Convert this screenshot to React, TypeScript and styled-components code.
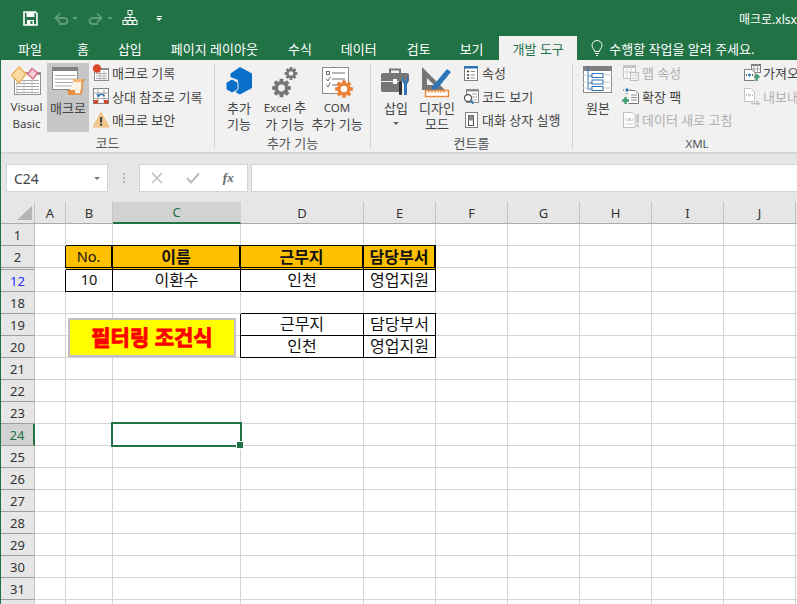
import React from "react";
import styled, { createGlobalStyle } from "styled-components";

const GREEN = "#217346";
const FONT = `"Noto Sans", "Noto Sans CJK KR", sans-serif`;

const GlobalStyle = createGlobalStyle`
  html, body { margin: 0; padding: 0; background: #fff; overflow: hidden; }
  body { font-family: ${FONT}; }
  * { box-sizing: border-box; }
`;

// ---------- icons ----------

const gearPath = (cx: number, cy: number, r: number, teeth = 8) => {
  const pts: string[] = [];
  const inner = r * 0.72;
  for (let i = 0; i < teeth; i++) {
    const a = (i / teeth) * Math.PI * 2;
    const w = Math.PI / teeth / 1.7;
    const p = (rad: number, ang: number) =>
      `${(cx + rad * Math.cos(ang)).toFixed(2)} ${(cy + rad * Math.sin(ang)).toFixed(2)}`;
    pts.push(p(inner, a - w * 1.4), p(r, a - w * 0.8), p(r, a + w * 0.8), p(inner, a + w * 1.4));
  }
  const hole = r * 0.36;
  return `M${pts.join("L")}Z M${cx - hole} ${cy}a${hole} ${hole} 0 1 0 ${hole * 2} 0a${hole} ${hole} 0 1 0 ${-hole * 2} 0Z`;
};

const TableLines = ({ x, y, w, rows, gap, color = "#a6a6a6" }: { x: number; y: number; w: number; rows: number; gap: number; color?: string }) => (
  <>
    {Array.from({ length: rows }).map((_, i) => (
      <line key={i} x1={x} x2={x + w} y1={y + i * gap + 0.5} y2={y + i * gap + 0.5} stroke={color} />
    ))}
  </>
);

const VisualBasicIcon = () => (
  <svg width="32" height="30" viewBox="1 0 32 30">
    <rect x="4.500" y="6.500" width="26" height="22" fill="#fff" stroke="#8f8f8f" />
    <rect x="20" y="6" width="11" height="3" fill="#8f8f8f" />
    <TableLines x={6} y={14} w={23} rows={5} gap={3} />
    <path d="M7 14V28M14 14V28M22 14V28" stroke="#c4c4c4" fill="none" />
    <path d="M9 1L16 8 9 17 1.500 9Z" fill="#f7dca4" stroke="#eeb45c" strokeWidth="1.500" />
    <path d="M22 2.500L27.500 7 23 13 17.500 8Z" fill="#f9cfd7" stroke="#dc6d85" strokeWidth="1.500" />
  </svg>
);

const MacroIcon = () => (
  <svg width="34" height="30" viewBox="0 0 34 30">
    <rect x="1.500" y="1.500" width="25" height="22" fill="#fff" stroke="#8a8a8a" />
    <rect x="1" y="1" width="26" height="4" fill="#7f7f7f" />
    <TableLines x={4} y={9} w={21} rows={4} gap={3.500} color="#a9a9a9" />
    <path d="M23 14H33L31 16V25H30V28H17" fill="#fdf3e3" stroke="#ea8c3d" strokeWidth="1.500" />
    <path d="M16 24H24V28H18Z" fill="#ea8c3d" />
    <path d="M22 13h9v3h-9z" fill="#f3b67b" />
  </svg>
);

const RecordIcon = () => (
  <svg width="18" height="18" viewBox="0 0 18 18">
    <rect x="2.500" y="4.500" width="14" height="12" fill="#fff" stroke="#8c8c8c" />
    <rect x="9" y="4" width="8" height="2" fill="#8c8c8c" />
    <TableLines x={4} y={9} w={11} rows={3} gap={2.500} />
    <path d="M8 7V16M12 7V16" stroke="#b5b5b5" />
    <circle cx="5" cy="4.500" r="4.200" fill="#d9472b" />
  </svg>
);

const RelativeIcon = () => (
  <svg width="18" height="18" viewBox="0 0 18 18">
    <rect x="1.500" y="1.500" width="15" height="15" fill="#fff" stroke="#7f7f7f" />
    <path d="M6 1V17M12 1V17M1 6H17M1 11.500H17" stroke="#a8a8a8" />
    <path d="M12.500 9C11 6.500 7.500 6.500 6 9" stroke="#2e75b6" strokeWidth="1.500" fill="none" />
    <path d="M4.500 6.500L5.500 10 8.500 9Z" fill="#2e75b6" />
    <rect x="2" y="13" width="4" height="3.500" fill="#d9472b" />
    <rect x="12" y="13" width="4" height="3.500" fill="#d9472b" />
  </svg>
);

const WarnIcon = () => (
  <svg width="18" height="18" viewBox="0 0 18 18">
    <path d="M9 1.500L17 16H1Z" fill="#f3c98b" stroke="#edbd79" strokeLinejoin="round" />
    <rect x="8" y="6" width="2.200" height="5.500" fill="#444" />
    <rect x="8" y="12.500" width="2.200" height="2.200" fill="#444" />
  </svg>
);

const AddinIcon = () => (
  <svg width="30" height="30" viewBox="0 0 30 30">
    <path d="M16 1L28 7.500V22L16 28.500 12 26.500 14 14 6.500 11V7.500Z" fill="#0a6fc9" />
    <path d="M8 13L14 16.500V23.500L8 27 2 23.500V16.500Z" fill="#0a6fc9" stroke="#f1f1f1" strokeWidth="1" />
  </svg>
);

const GearsIcon = () => (
  <svg width="32" height="32" viewBox="0 0 32 32">
    <path d={gearPath(12.500, 22, 9.500, 8)} fill="#767676" fillRule="evenodd" />
    <path d={gearPath(22, 7.500, 6.500, 8)} fill="#767676" fillRule="evenodd" />
  </svg>
);

const ComIcon = () => (
  <svg width="32" height="32" viewBox="0 0 32 32">
    <rect x="1.500" y="1.500" width="26" height="26" fill="#fff" stroke="#8a8a8a" />
    <rect x="5.500" y="5.500" width="3" height="3" fill="none" stroke="#777" />
    <path d="M11 7H24M11 13H24M11 19H17M5 12.500L7 15 9.500 10.500M5 18.500L7 21 9.500 16.500" stroke="#707070" fill="none" />
    <path d={gearPath(23, 23, 9, 8)} fill="#ea8335" fillRule="evenodd" />
  </svg>
);

const InsertIcon = () => (
  <svg width="32" height="32" viewBox="0 0 32 32">
    <path d="M10 7V3.500H20V7" fill="none" stroke="#767676" strokeWidth="2" />
    <path d="M1 9a2 2 0 0 1 2-2h24a2 2 0 0 1 2 2v6H1Z" fill="#767676" />
    <path d="M1 16H20V26H3a2 2 0 0 1-2-2Z" fill="#767676" />
    <rect x="13" y="13" width="4" height="5" fill="#fff" />
    <path d="M22.500 11V16L24 18V29H27V18L28.500 16V11H27V15H24V11Z" fill="#2e75b6" />
    <rect x="19" y="15" width="3" height="14" rx="1" fill="#333" />
  </svg>
);

const DesignIcon = () => (
  <svg width="34" height="32" viewBox="0 0 34 32">
    <path d="M2 1V24H25Z" fill="#767676" />
    <path d="M7 12V19H14Z" fill="#f1f1f1" />
    <path d="M12 21L27 3 31 6 17 23 11 25Z" fill="#2e75b6" />
    <rect x="5.500" y="24.500" width="23" height="6" fill="#fff" stroke="#ea8c3d" strokeWidth="1.500" />
    <path d="M9 25V27M12 25V27M15 25V27M18 25V27M21 25V27M24 25V27" stroke="#ea8c3d" />
  </svg>
);

const PropsIcon = () => (
  <svg width="18" height="18" viewBox="0 0 18 18">
    <rect x="2.500" y="2.500" width="13" height="14" fill="#fff" stroke="#7f7f7f" />
    <rect x="2" y="2" width="14" height="2.500" fill="#2e75b6" />
    <path d="M5 7.500h2M5 11h2M5 14h2" stroke="#333" strokeWidth="1.500" />
    <path d="M8.500 7.500H13M8.500 11H13M8.500 14H13" stroke="#8c8c8c" />
  </svg>
);

const CodeIcon = () => (
  <svg width="18" height="18" viewBox="0 0 18 18">
    <rect x="4.500" y="2.500" width="12" height="13" fill="#fff" stroke="#8c8c8c" />
    <rect x="4" y="2" width="13" height="2.500" fill="#8c8c8c" />
    <path d="M10 7H15M10 10H15M10 13H15" stroke="#a6a6a6" />
    <circle cx="6" cy="11" r="3.500" fill="#fff" stroke="#5a5a5a" strokeWidth="1.300" />
    <path d="M8.500 13.500L11.500 16.500" stroke="#2e75b6" strokeWidth="2" />
  </svg>
);

const DialogIcon = () => (
  <svg width="18" height="18" viewBox="0 0 18 18">
    <rect x="3.500" y="1.500" width="12" height="15" fill="#fff" stroke="#7f7f7f" />
    <rect x="6.500" y="4.500" width="5" height="10" fill="#fff" stroke="#555" />
    <rect x="6.500" y="4.500" width="5" height="5" fill="#8a8a8a" />
  </svg>
);

const MapPropsIcon = () => (
  <svg width="18" height="18" viewBox="0 0 18 18">
    <rect x="1.500" y="1.500" width="12" height="13" fill="#fff" stroke="#c2c2c2" />
    <rect x="1" y="1" width="13" height="3" fill="#c2c2c2" />
    <path d="M5 1V15M9 1V15M1 8H14" stroke="#cfcfcf" />
    <rect x="8.500" y="8.500" width="8" height="8" fill="#f1f1f1" stroke="#bdbdbd" />
    <path d="M10.500 11h1M13 11h2M10.500 14h1M13 14h2" stroke="#bdbdbd" />
  </svg>
);

const PackIcon = () => (
  <svg width="18" height="18" viewBox="0 0 18 18">
    <path d="M7.500 3.500H13L16.500 7V16.500H6.500" fill="#fff" stroke="#7a7a7a" />
    <path d="M9 8H15M9 10.500H15M9 13H15" stroke="#8c8c8c" />
    <circle cx="5" cy="3" r="1.700" fill="#2e75b6" />
    <path d="M1 3h1M8 3h1M5 6v1" stroke="#555" />
    <path d="M0 13.500H7M3.500 10V17" stroke="#3f9b6c" strokeWidth="2.400" />
  </svg>
);

const RefreshIcon = () => (
  <svg width="18" height="18" viewBox="0 0 18 18">
    <path d="M1.500 1.500H10L13 4.500V16.500H1.500Z" fill="#fff" stroke="#c2c2c2" />
    <path d="M3.500 8.500L5 7M3.500 8.500L5 10M11 8.500L9.500 7M11 8.500L9.500 10" stroke="#bdbdbd" fill="none" />
    <circle cx="7.200" cy="8.500" r="1.500" fill="#c4c4c4" />
    <path d="M3.500 13H11" stroke="#cfcfcf" />
    <rect x="14.500" y="3" width="2.200" height="9" fill="#bdbdbd" />
    <rect x="14.500" y="13.500" width="2.200" height="2.500" fill="#bdbdbd" />
  </svg>
);

const ImportIcon = () => (
  <svg width="18" height="18" viewBox="0 0 18 18">
    <rect x="8.500" y="0.500" width="9" height="8" fill="#fff" stroke="#7a7a7a" />
    <rect x="8" y="0" width="10" height="2" fill="#7a7a7a" />
    <path d="M11 0V9M14.500 0V9M8 5H18" stroke="#a6a6a6" />
    <path d="M1.500 5.500H9L12 8.500V16.500H1.500Z" fill="#fff" stroke="#7a7a7a" />
    <circle cx="6.500" cy="11" r="1.500" fill="#2e75b6" />
    <path d="M3 11L4 10M3 11L4 12M10 11L9 10M10 11L9 12" stroke="#555" fill="none" />
    <path d="M14 17V11M11.500 13.500L14 11 16.500 13.500" stroke="#3f9b6c" strokeWidth="1.800" fill="none" />
  </svg>
);

const ExportIcon = () => (
  <svg width="18" height="18" viewBox="0 0 18 18">
    <path d="M1.500 1.500H8L11.500 5V14.500H1.500Z" fill="#fff" stroke="#c2c2c2" />
    <circle cx="6.500" cy="8" r="1.500" fill="#cdcdcd" />
    <path d="M3 8L4 7M3 8L4 9M10 8L9 7M10 8L9 9" stroke="#c2c2c2" fill="none" />
    <path d="M8 16.500H16M13.500 14L16 16.500 13.500 18.500" stroke="#c2c2c2" strokeWidth="1.500" fill="none" />
  </svg>
);

const SourceIcon = () => (
  <svg width="30" height="30" viewBox="0 0 30 30">
    <rect x="0.500" y="0.500" width="28" height="26" fill="#fff" stroke="#8a8a8a" />
    <rect x="0" y="0" width="29" height="5" fill="#7f7f7f" />
    <path d="M5 0V24M5 10H9M5 17H9M5 23H9" stroke="#2e75b6" />
    <path d="M0 9H29M0 16H29M0 22H29" stroke="#c9c9c9" />
    <rect x="9" y="7.500" width="11" height="4" fill="#fff" stroke="#2e75b6" />
    <rect x="9" y="14" width="11" height="4" fill="#fff" stroke="#2e75b6" />
    <rect x="9" y="20.500" width="11" height="4" fill="#fff" stroke="#2e75b6" />
  </svg>
);

// ---------- title bar ----------

const TitleBar = styled.header`
  height: 36px;
  background: ${GREEN};
  display: flex;
  align-items: center;
  padding-left: 22px;
  overflow: hidden;
`;

const QuickAccess = styled.div`
  display: flex;
  align-items: center;
  height: 32px;
`;

const QuickSlot = styled.span<{ $width: number; $left?: number }>`
  width: ${(p) => p.$width}px;
  margin-left: ${(p) => p.$left ?? 0}px;
  display: flex;
  align-items: center;
  justify-content: center;
`;

const FileName = styled.div`
  margin-left: auto;
  width: 58px;
  flex: none;
  font-size: 12px;
  color: #fff;
  white-space: nowrap;
  margin-top: 2px;
`;

const SaveIcon = () => (
  <svg width="15" height="15" viewBox="0 0 15 15">
    <path d="M1 1H12.500L14 2.500V14H1Z" fill="none" stroke="#fff" strokeWidth="1.600" />
    <rect x="3.500" y="1" width="8" height="5" fill="#fff" />
    <rect x="4" y="9" width="7" height="5" fill="#fff" />
    <rect x="7.500" y="10" width="2" height="3" fill={GREEN} />
  </svg>
);

const ArrowIcon = ({ flip }: { flip?: boolean }) => (
  <svg width="15" height="13" viewBox="0 0 15 13" style={flip ? { transform: "scaleX(-1)" } : undefined}>
    <path d="M2 6H10C12.500 6 13.500 7.500 13.500 9S12.500 12 10 12H5" fill="none" stroke="#5e9c7c" strokeWidth="1.800" />
    <path d="M6 1.500L1.500 6 6 10.500" fill="none" stroke="#5e9c7c" strokeWidth="1.800" />
  </svg>
);

const NetworkIcon = () => (
  <svg width="16" height="16" viewBox="0 0 16 16" fill="#fff" stroke="#fff">
    <rect x="6" y="0.500" width="4" height="4" fill="none" />
    <rect x="1" y="10.500" width="4" height="4" fill="none" />
    <rect x="6" y="10.500" width="4" height="4" fill="none" />
    <rect x="11" y="10.500" width="4" height="4" fill="none" />
    <path d="M8 4.500V10.500M8 7.500H3V10.500M8 7.500H13V10.500" fill="none" />
  </svg>
);

const SmallCaret = styled.span<{ $color: string }>`
  width: 0;
  height: 0;
  border-left: 3px solid transparent;
  border-right: 3px solid transparent;
  border-top: 3px solid ${(p) => p.$color};
`;

const CustomizeCaret = styled.span`
  display: flex;
  flex-direction: column;
  align-items: center;
  gap: 1px;
  &::before {
    content: "";
    width: 5px;
    height: 1px;
    background: #fff;
  }
  &::after {
    content: "";
    border-left: 3px solid transparent;
    border-right: 3px solid transparent;
    border-top: 3px solid #fff;
  }
`;

// ---------- tabs ----------

const TabBar = styled.nav`
  height: 24px;
  background: ${GREEN};
  display: flex;
  align-items: stretch;
  padding-left: 3px;
`;

const Tab = styled.div<{ $active?: boolean; $pad?: number; $left?: number }>`
  display: flex;
  align-items: center;
  margin-left: ${(p) => p.$left ?? 0}px;
  padding: 0 ${(p) => p.$pad ?? 14.5}px;
  font-size: 13px;
  white-space: nowrap;
  color: ${(p) => (p.$active ? GREEN : "#fff")};
  background: ${(p) => (p.$active ? "#f1f1f1" : "transparent")};
`;

const TellMe = styled.div`
  display: flex;
  align-items: center;
  gap: 5px;
  padding-left: 13px;
  font-size: 13px;
  color: #fff;
  white-space: nowrap;
`;

// ---------- ribbon ----------

const Ribbon = styled.section`
  height: 94px;
  display: flex;
  background: #f1f1f1;
  border-bottom: 2px solid #d6d6d6;
  overflow: hidden;
`;

const Group = styled.div<{ $width: number }>`
  width: ${(p) => p.$width}px;
  flex: none;
  display: flex;
  flex-direction: column;
  align-items: stretch;
`;

const GroupBody = styled.div<{ $pad: number }>`
  height: 74px;
  padding: 3px 0 0 ${(p) => p.$pad}px;
  display: flex;
`;

const GroupLabel = styled.div`
  height: 18px;
  line-height: 18px;
  font-size: 13px;
  color: #555;
  text-align: center;
`;

const Separator = styled.div`
  width: 1px;
  flex: none;
  margin: 4px 0 4px;
  background: #d2d2d2;
`;

const LargeButton = styled.div<{ $width: number; $active?: boolean; $gapAfter?: number }>`
  width: ${(p) => p.$width}px;
  height: 69px;
  flex: none;
  margin-right: ${(p) => p.$gapAfter ?? 0}px;
  display: flex;
  flex-direction: column;
  align-items: center;
  background: ${(p) => (p.$active ? "#c6c6c6" : "transparent")};
`;

const LargeIcon = styled.div`
  height: 37px;
  display: flex;
  align-items: flex-start;
  justify-content: center;
  padding-top: 3px;
`;

const LargeText = styled.div`
  font-size: 13px;
  line-height: 16px;
  color: #444;
  text-align: center;
  white-space: pre;
`;

const Latin = styled.span`
  font-size: 11.5px;
`;

const DropCaret = styled(SmallCaret)`
  margin-top: 6px;
`;

const SmallList = styled.div<{ $width?: number }>`
  display: flex;
  flex-direction: column;
  margin-top: -2px;
  width: ${(p) => (p.$width ? `${p.$width}px` : "auto")};
  flex: none;
`;

const SmallRow = styled.div<{ $disabled?: boolean }>`
  height: 23.5px;
  display: flex;
  align-items: center;
  gap: 2px;
  font-size: 13px;
  white-space: nowrap;
  color: ${(p) => (p.$disabled ? "#b0b0b0" : "#444")};
`;

// ---------- formula bar ----------

const FormulaBar = styled.div`
  height: 48px;
  background: #e6e6e6;
  display: flex;
  padding: 10px 0 0 5px;
`;

const FormulaBox = styled.div`
  height: 28px;
  background: #fff;
  border: 1px solid #d4d4d4;
  display: flex;
  align-items: center;
`;

const NameBox = styled(FormulaBox)`
  width: 102px;
  padding: 0 7px;
  justify-content: space-between;
  font-size: 14px;
  color: #444;
`;

const BarGrip = styled.div`
  width: 31px;
  height: 28px;
  display: flex;
  flex-direction: column;
  align-items: center;
  justify-content: center;
  gap: 2px;
  i {
    width: 2px;
    height: 2px;
    background: #b5b5b5;
  }
`;

const FormulaButtons = styled(FormulaBox)`
  width: 109px;
  justify-content: space-around;
  padding: 0 2px 0 0;
  margin-right: 3px;
`;

const FxLabel = styled.span`
  font-family: "Liberation Serif", serif;
  font-style: italic;
  font-weight: 700;
  font-size: 13px;
  color: #666;
`;

const FormulaInput = styled(FormulaBox)`
  flex: 1;
  border-right: none;
`;

// ---------- sheet ----------

const COLUMNS: [string, number][] = [
  ["A", 31], ["B", 47], ["C", 128], ["D", 123], ["E", 72], ["F", 72],
  ["G", 72], ["H", 72], ["I", 72], ["J", 72], ["", 40],
];

type CellKind = "header" | "box" | undefined;
type CellData = { text: string; kind: CellKind; bold?: boolean; latin?: boolean };

const CELLS: Record<string, Record<string, CellData>> = {
  "2": {
    B: { text: "No.", kind: "header", latin: true },
    C: { text: "이름", kind: "header", bold: true },
    D: { text: "근무지", kind: "header", bold: true },
    E: { text: "담당부서", kind: "header", bold: true },
  },
  "12": {
    B: { text: "10", kind: "box", latin: true },
    C: { text: "이환수", kind: "box" },
    D: { text: "인천", kind: "box" },
    E: { text: "영업지원", kind: "box" },
  },
  "19": {
    D: { text: "근무지", kind: "box" },
    E: { text: "담당부서", kind: "box" },
  },
  "20": {
    D: { text: "인천", kind: "box" },
    E: { text: "영업지원", kind: "box" },
  },
};

const ROW_LABELS = ["1", "2", "12", ...Array.from({ length: 15 }, (_, i) => String(i + 18))];

const Sheet = styled.main`
  position: relative;
  height: 402px;
  overflow: hidden;
  background: #fff;
`;

const Row = styled.div`
  display: flex;
  height: 22px;
`;

const HeaderRow = styled(Row)`
  background: #e6e6e6;
`;

const Corner = styled.div`
  width: 34px;
  flex: none;
  background: #e6e6e6;
  border-right: 1px solid #c4c4c4;
  border-bottom: 1px solid #ababab;
  padding: 4px 2px 3px 16px;
  &::after {
    content: "";
    display: block;
    width: 15px;
    height: 14px;
    background: #b4b4b4;
    clip-path: polygon(100% 0, 100% 100%, 0 100%);
  }
`;

const ColHead = styled.div<{ $width: number; $selected?: boolean }>`
  width: ${(p) => p.$width}px;
  flex: none;
  display: flex;
  align-items: center;
  justify-content: center;
  font-size: 13px;
  color: ${(p) => (p.$selected ? GREEN : "#333")};
  background: ${(p) => (p.$selected ? "#d2d2d2" : "#e6e6e6")};
  border-right: 1px solid ${(p) => (p.$selected ? "#d2d2d2" : "#c4c4c4")};
  border-bottom: ${(p) => (p.$selected ? `2px solid ${GREEN}` : "1px solid #ababab")};
`;

const RowHead = styled.div<{ $selected?: boolean; $filtered?: boolean }>`
  width: 34px;
  flex: none;
  display: flex;
  align-items: center;
  justify-content: center;
  font-size: 13px;
  color: ${(p) => (p.$selected ? GREEN : p.$filtered ? "#2a2aff" : "#333")};
  background: ${(p) => (p.$selected ? "#d2d2d2" : "#e6e6e6")};
  border-right: ${(p) => (p.$selected ? `2px solid ${GREEN}` : "1px solid #c4c4c4")};
  border-bottom: 1px solid #9e9e9e;
`;

const Cell = styled.div<{ $width: number; $kind?: CellKind; $bold?: boolean; $latin?: boolean; $selected?: boolean }>`
  position: relative;
  z-index: ${(p) => (p.$selected ? 2 : "auto")};
  width: ${(p) => p.$width}px;
  flex: none;
  display: flex;
  align-items: center;
  justify-content: center;
  padding-bottom: ${(p) => (p.$kind === "box" ? 3 : p.$kind === "header" ? 2 : 0)}px;
  font-size: ${(p) => (p.$latin ? 14.5 : 16)}px;
  font-weight: ${(p) => (p.$bold ? 700 : 400)};
  color: #111;
  white-space: nowrap;
  background: ${(p) => (p.$kind === "header" ? "#ffc000" : "#fff")};
  border-right: ${(p) => (p.$kind === "header" ? 2 : 1)}px solid ${(p) => (p.$kind ? "#000" : "#d4d4d4")};
  border-bottom: 1px solid ${(p) => (p.$kind ? "#000" : "#d4d4d4")};
  box-shadow: ${(p) => (p.$kind ? "-1px 0 0 #000, 0 -1px 0 #000" : "none")};
  ${(p) =>
    p.$selected &&
    `
    &::before {
      content: "";
      position: absolute;
      inset: -2px -2px -2px -2px;
      border: 2px solid ${GREEN};
    }
    &::after {
      content: "";
      position: absolute;
      right: -4px;
      bottom: -4px;
      width: 6px;
      height: 6px;
      background: ${GREEN};
      border: 1px solid #fff;
      z-index: 1;
    }
  `}
`;

const HiddenRowGap = styled.div`
  display: flex;
  height: 2px;
`;

const GapHead = styled.div`
  width: 34px;
  flex: none;
  background: #e6e6e6;
  border-right: 1px solid #c4c4c4;
  border-bottom: 1px solid #9e9e9e;
`;

const GapFill = styled.div<{ $width: number; $fill: boolean }>`
  width: ${(p) => p.$width}px;
  flex: none;
  background: ${(p) => (p.$fill ? "#ffc000" : "#fff")};
  border-right: 1px solid ${(p) => (p.$fill ? "#000" : "#d4d4d4")};
`;

const FilterShape = styled.div`
  position: absolute;
  left: 67px;
  top: 116px;
  width: 168px;
  height: 39px;
  padding-bottom: 4px;
  background: #ffff00;
  border: 2px solid #c0c0c0;
  display: flex;
  align-items: center;
  justify-content: center;
  font-size: 21px;
  font-weight: 700;
  color: #ff0000;
  -webkit-text-stroke: 0.9px #ff0000;
  white-space: nowrap;
`;

const Page = styled.div`
  width: 797px;
  height: 604px;
  overflow: hidden;
  border-left: 1px solid ${GREEN};
  position: relative;
`;

const TextButton = ({ icon, children, width, active, gapAfter, caret }: { icon: React.ReactNode; children: React.ReactNode; width: number; active?: boolean; gapAfter?: number; caret?: boolean }) => (
  <LargeButton $width={width} $active={active} $gapAfter={gapAfter}>
    <LargeIcon>{icon}</LargeIcon>
    <LargeText>{children}</LargeText>
    {caret && <DropCaret $color="#666" />}
  </LargeButton>
);

export default function App() {
  return (
    <Page>
      <GlobalStyle />
      <TitleBar>
        <QuickAccess>
          <QuickSlot $width={15}><SaveIcon /></QuickSlot>
          <QuickSlot $width={20} $left={13}><ArrowIcon /></QuickSlot>
          <QuickSlot $width={8}><SmallCaret $color="#5e9c7c" /></QuickSlot>
          <QuickSlot $width={20} $left={6}><ArrowIcon flip /></QuickSlot>
          <QuickSlot $width={10}><SmallCaret $color="#5e9c7c" /></QuickSlot>
          <QuickSlot $width={30}><NetworkIcon /></QuickSlot>
          <QuickSlot $width={28}><CustomizeCaret /></QuickSlot>
        </QuickAccess>
        <FileName>매크로.xlsx</FileName>
      </TitleBar>

      <TabBar>
        <Tab $pad={14}>파일</Tab>
        <Tab $left={6.5}>홈</Tab>
        <Tab>삽입</Tab>
        <Tab>페이지 레이아웃</Tab>
        <Tab $left={1}>수식</Tab>
        <Tab>데이터</Tab>
        <Tab $left={1}>검토</Tab>
        <Tab>보기</Tab>
        <Tab $active $pad={13.5} $left={1}>개발 도구</Tab>
        <TellMe>
          <svg width="14" height="16" viewBox="0 0 14 16" fill="none" stroke="#fff">
            <path d="M4.500 11.500C4.500 9 2 8.500 2 5.500a5 5 0 0 1 10 0C12 8.500 9.500 9 9.500 11.500Z" />
            <path d="M5 13.500H9M6 15.500H8" />
          </svg>
          수행할 작업을 알려 주세요.
        </TellMe>
      </TabBar>

      <Ribbon>
        <Group $width={213}>
          <GroupBody $pad={5}>
            <TextButton icon={<VisualBasicIcon />} width={41}><Latin>{"Visual\nBasic"}</Latin></TextButton>
            <TextButton icon={<MacroIcon />} width={42} active gapAfter={3}>매크로</TextButton>
            <SmallList>
              <SmallRow><RecordIcon />매크로 기록</SmallRow>
              <SmallRow><RelativeIcon />상대 참조로 기록</SmallRow>
              <SmallRow><WarnIcon />매크로 보안</SmallRow>
            </SmallList>
          </GroupBody>
          <GroupLabel>코드</GroupLabel>
        </Group>
        <Separator />
        <Group $width={155}>
          <GroupBody $pad={6}>
            <TextButton icon={<AddinIcon />} width={36} gapAfter={3}>{"추가\n기능"}</TextButton>
            <TextButton icon={<GearsIcon />} width={50}><Latin>Excel</Latin>{" 추\n가 기능"}</TextButton>
            <TextButton icon={<ComIcon />} width={54}><Latin>COM</Latin>{"\n추가 기능"}</TextButton>
          </GroupBody>
          <GroupLabel>추가 기능</GroupLabel>
        </Group>
        <Separator />
        <Group $width={201}>
          <GroupBody $pad={5}>
            <TextButton icon={<InsertIcon />} width={40} caret>삽입</TextButton>
            <TextButton icon={<DesignIcon />} width={42} gapAfter={4}>{"디자인\n모드"}</TextButton>
            <SmallList>
              <SmallRow><PropsIcon />속성</SmallRow>
              <SmallRow><CodeIcon />코드 보기</SmallRow>
              <SmallRow><DialogIcon />대화 상자 실행</SmallRow>
            </SmallList>
          </GroupBody>
          <GroupLabel>컨트롤</GroupLabel>
        </Group>
        <Separator />
        <Group $width={248}>
          <GroupBody $pad={5}>
            <TextButton icon={<SourceIcon />} width={40} gapAfter={4}>원본</TextButton>
            <SmallList $width={121}>
              <SmallRow $disabled><MapPropsIcon />맵 속성</SmallRow>
              <SmallRow><PackIcon />확장 팩</SmallRow>
              <SmallRow $disabled><RefreshIcon />데이터 새로 고침</SmallRow>
            </SmallList>
            <SmallList>
              <SmallRow><ImportIcon />가져오기</SmallRow>
              <SmallRow $disabled><ExportIcon />내보내기</SmallRow>
            </SmallList>
          </GroupBody>
          <GroupLabel><Latin>XML</Latin></GroupLabel>
        </Group>
      </Ribbon>

      <FormulaBar>
        <NameBox>
          C24
          <SmallCaret $color="#777" />
        </NameBox>
        <BarGrip><i /><i /><i /></BarGrip>
        <FormulaButtons>
          <svg width="12" height="12" viewBox="0 0 12 12"><path d="M1 1L11 11M11 1L1 11" stroke="#bdbdbd" strokeWidth="1.500" /></svg>
          <svg width="14" height="12" viewBox="0 0 14 12"><path d="M1 6L5 10.500 13 1.500" stroke="#bdbdbd" strokeWidth="2" fill="none" /></svg>
          <FxLabel>fx</FxLabel>
        </FormulaButtons>
        <FormulaInput />
      </FormulaBar>

      <Sheet>
        <HeaderRow>
          <Corner />
          {COLUMNS.map(([name, w]) => (
            <ColHead key={name || "end"} $width={w} $selected={name === "C"}>{name}</ColHead>
          ))}
        </HeaderRow>
        {ROW_LABELS.map((label) => (
          <React.Fragment key={label}>
            <Row>
              <RowHead $selected={label === "24"} $filtered={label === "12"}>{label}</RowHead>
              {COLUMNS.map(([name, w]) => {
                const cell = CELLS[label]?.[name];
                return (
                  <Cell
                    key={name || "end"}
                    $width={w}
                    $kind={cell?.kind}
                    $bold={cell?.bold}
                    $latin={cell?.latin}
                    $selected={label === "24" && name === "C"}
                  >
                    {cell?.text}
                  </Cell>
                );
              })}
            </Row>
            {label === "2" && (
              <HiddenRowGap>
                <GapHead />
                {COLUMNS.map(([name, w]) => (
                  <GapFill key={name || "end"} $width={w} $fill={name !== "" && "BCDE".includes(name)} />
                ))}
              </HiddenRowGap>
            )}
          </React.Fragment>
        ))}
        <FilterShape>필터링 조건식</FilterShape>
      </Sheet>
    </Page>
  );
}
